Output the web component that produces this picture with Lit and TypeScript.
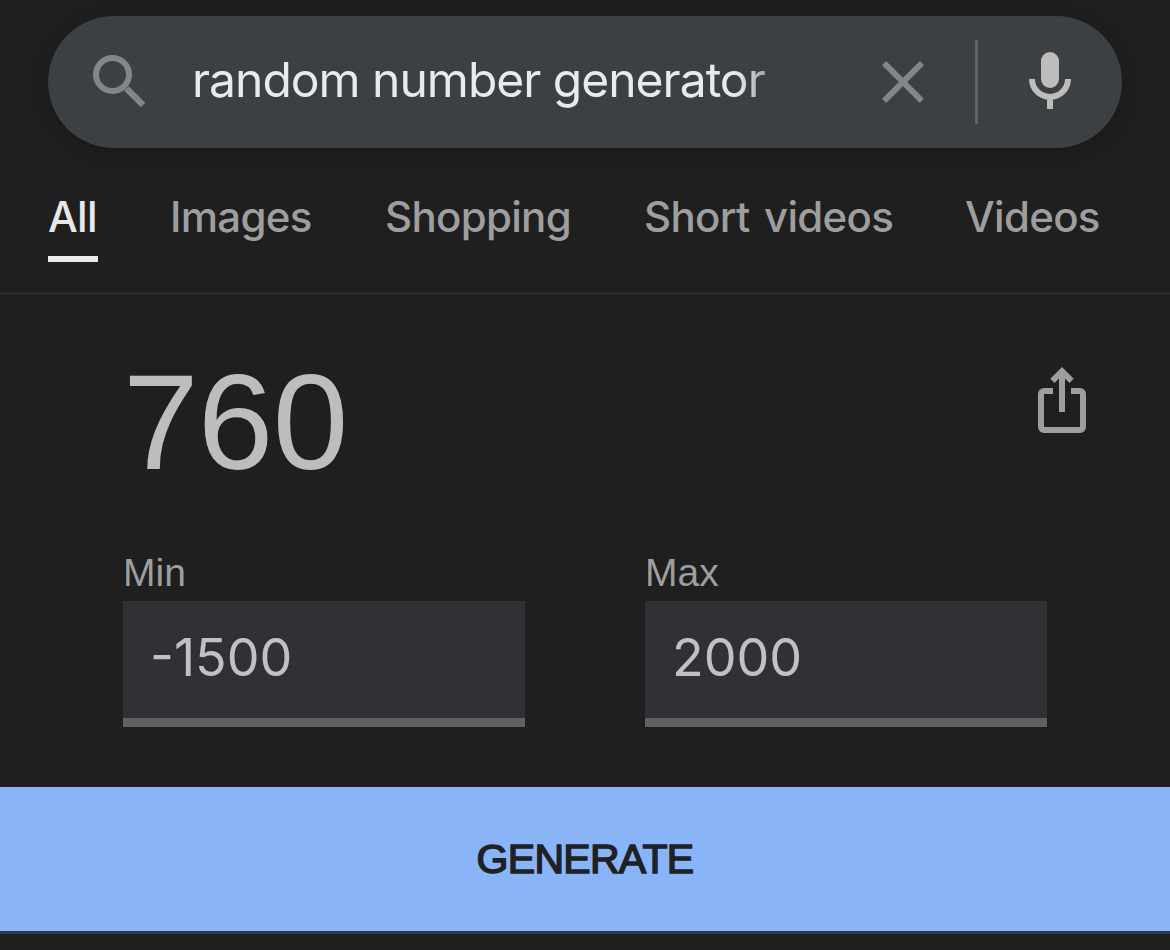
import { LitElement, css, html } from "lit";
import { customElement, property, state } from "lit/decorators.js";

@customElement("search-bar")
export class SearchBar extends LitElement {
  @property() query = "";

  static styles = css`
    :host {
      display: block;
      padding: 16px 48px 0;
    }

    .bar {
      display: flex;
      align-items: center;
      box-sizing: border-box;
      height: 132px;
      padding: 0 40px;
      border-radius: 66px;
      background: #3c4043;
      box-shadow: 0 3px 18px rgba(0, 0, 0, 0.22);
    }

    .icon {
      display: block;
      flex: none;
    }

    .query {
      flex: none;
      box-sizing: border-box;
      width: 600px;
      margin-left: 42px;
      padding-bottom: 4px;
      color: #e8eaed;
      font: 400 48px/64px Inter, "Liberation Sans", sans-serif;
      letter-spacing: -1px;
      white-space: nowrap;
      overflow: hidden;
      -webkit-mask-image: linear-gradient(to right, #000 545px, transparent 618px);
      mask-image: linear-gradient(to right, #000 545px, transparent 618px);
    }

    .clear {
      margin-left: 90px;
    }

    .divider {
      flex: none;
      width: 3px;
      height: 84px;
      margin: 0 36px 0 51px;
      background: #5f6368;
    }
  `;

  render() {
    return html`
      <div class="bar">
        <svg class="icon" width="62" height="62" viewBox="0 0 62 62" fill="none" stroke="#80868b" stroke-width="6">
          <circle cx="24.5" cy="23.5" r="16.5" />
          <path d="M38.5 37.5L55 54" stroke-width="6.4" />
        </svg>
        <div class="query">${this.query}</div>
        <svg class="icon clear" width="42" height="42" viewBox="0 0 42 42" fill="none" stroke="#80868b" stroke-width="5.8">
          <path d="M2.1 2.1L39.9 39.9M39.9 2.1L2.1 39.9" />
        </svg>
        <div class="divider"></div>
        <svg class="icon" width="72" height="72" viewBox="0 0 72 72">
          <rect x="27" y="6" width="18" height="36" rx="9" fill="#bdbdbd" />
          <path d="M18 33a18 18 0 0 0 36 0M36 51v12" fill="none" stroke="#bdbdbd" stroke-width="6" />
        </svg>
      </div>
    `;
  }
}

@customElement("result-tabs")
export class ResultTabs extends LitElement {
  @property({ attribute: false }) tabs: string[] = [];
  @property() active = "";

  static styles = css`
    :host {
      display: block;
    }

    .tabs {
      display: grid;
      grid-template-columns: 50px 143px 187px 249px 133px;
      column-gap: 72px;
      height: 144px;
      padding: 0 48px;
      border-bottom: 3px solid #27292c;
      color: #9e9e9e;
      font: 500 42px/60px Inter, "Liberation Sans", sans-serif;
      letter-spacing: -0.7px;
      word-spacing: 4px;
      white-space: nowrap;
    }

    .tab {
      box-sizing: border-box;
      height: 114px;
      padding-top: 39px;
    }

    .tab.active {
      border-bottom: 6px solid #e8eaed;
      color: #e8e8e8;
    }
  `;

  render() {
    return html`
      <div class="tabs">
        ${this.tabs.map(
          (tab) => html`<div class="tab ${tab === this.active ? "active" : ""}">${tab}</div>`
        )}
      </div>
    `;
  }
}

@customElement("number-field")
export class NumberField extends LitElement {
  @property() label = "";
  @property({ type: Number }) value = 0;

  static styles = css`
    :host {
      display: block;
    }

    .label {
      height: 56px;
      color: #9e9e9e;
      font: 400 39px/56px "Liberation Sans", Arial, sans-serif;
    }

    .value {
      box-sizing: border-box;
      height: 126px;
      padding: 0 27px;
      border-bottom: 9px solid #5f6063;
      background: #303134;
      color: #c0c1c6;
      font: 400 52px/113px Inter, "Liberation Sans", sans-serif;
    }
  `;

  render() {
    return html`
      <div class="label">${this.label}</div>
      <div class="value">${this.value}</div>
    `;
  }
}

@customElement("app-root")
export class AppRoot extends LitElement {
  @state() min = -1500;
  @state() max = 2000;
  @state() result = 760;

  static styles = css`
    :host {
      display: block;
      height: 950px;
      overflow: hidden;
      background: #1f1f1f;
    }

    .top {
      display: flex;
      justify-content: space-between;
      height: 250px;
      padding: 0 81px 0 123px;
    }

    .result {
      margin-top: 49px;
      color: #bdbdbd;
      font: 400 136px/156px "Liberation Sans", Arial, sans-serif;
      letter-spacing: -0.8px;
    }

    .share {
      display: block;
      margin-top: 71px;
    }

    .fields {
      display: grid;
      grid-template-columns: 402px 402px;
      column-gap: 120px;
      padding: 0 123px;
    }

    .generate {
      display: block;
      width: 100%;
      height: 147px;
      margin-top: 60px;
      padding: 0;
      border: 0;
      border-bottom: 3px solid #2d3a4d;
      background: #8ab4f8;
      color: #202124;
      font: 400 41px/144px "Liberation Sans", Arial, sans-serif;
      letter-spacing: -0.7px;
      -webkit-text-stroke: 1.5px #202124;
      text-align: center;
      cursor: pointer;
    }
  `;

  render() {
    return html`
      <search-bar query="random number generator"></search-bar>
      <result-tabs
        .tabs=${["All", "Images", "Shopping", "Short videos", "Videos"]}
        active="All"
      ></result-tabs>
      <div class="top">
        <div class="result">${this.result}</div>
        <svg class="share" width="54" height="70" viewBox="0 0 54 70" fill="none" stroke="#9e9e9e" stroke-width="6">
          <path d="M18 25H9a3 3 0 0 0-3 3v33a3 3 0 0 0 3 3h36a3 3 0 0 0 3-3V28a3 3 0 0 0-3-3h-9" />
          <path d="M27 46V6M17.4 14.8L27 5.2l9.6 9.6" />
        </svg>
      </div>
      <div class="fields">
        <number-field label="Min" .value=${this.min}></number-field>
        <number-field label="Max" .value=${this.max}></number-field>
      </div>
      <button class="generate" @click="${this.generate}">GENERATE</button>
    `;
  }

  generate() {
    this.result = this.min + Math.floor(Math.random() * (this.max - this.min + 1));
  }
}
